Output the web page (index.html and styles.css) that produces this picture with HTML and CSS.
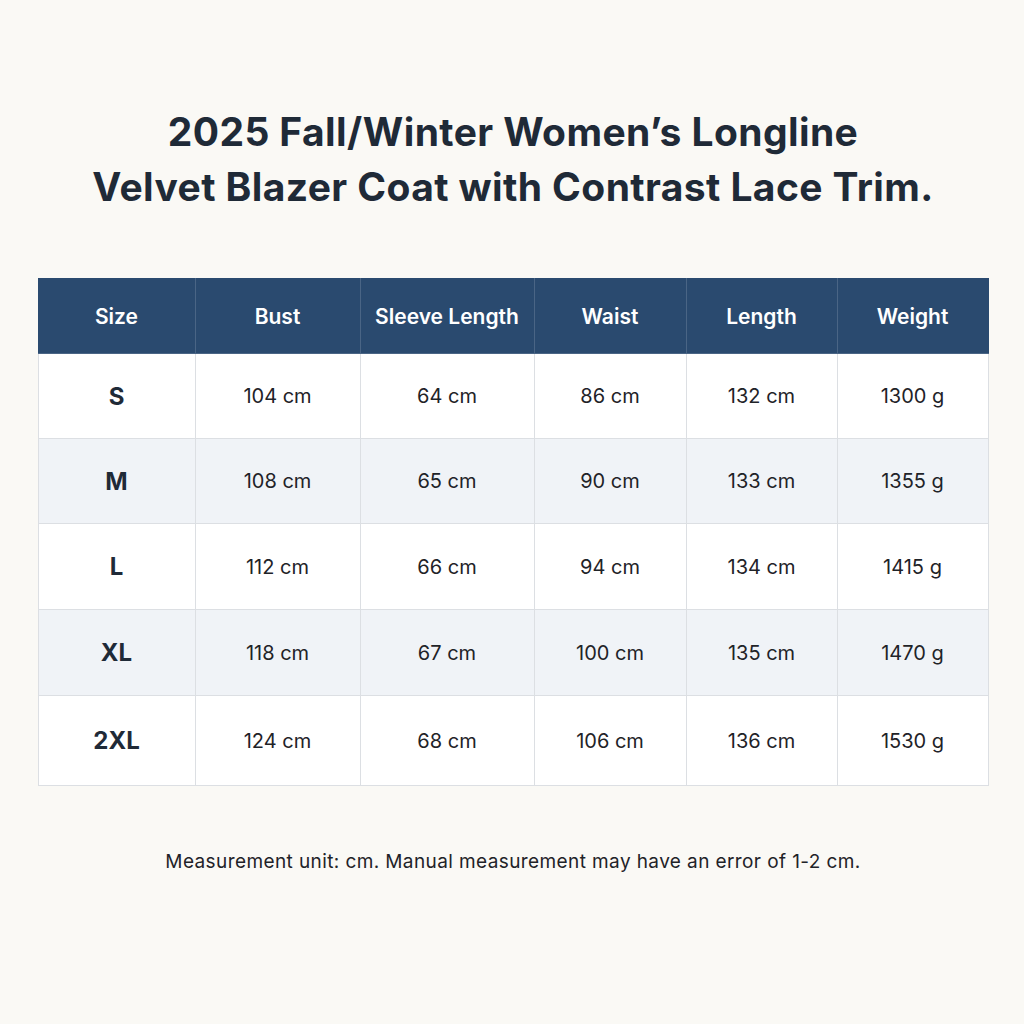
FILE: index.html
```html
<!DOCTYPE html>
<html lang="en">
<head>
<meta charset="utf-8">
<title>Size Chart</title>
<link rel="stylesheet" href="styles.css">
</head>
<body>
<main class="page">
  <h1 class="title">2025 Fall/Winter Women’s Longline<br>Velvet Blazer Coat with Contrast Lace Trim.</h1>
  <table class="chart">
    <colgroup>
      <col class="c1"><col class="c2"><col class="c3"><col class="c4"><col class="c5"><col class="c6">
    </colgroup>
    <thead>
      <tr><th>Size</th><th>Bust</th><th>Sleeve Length</th><th>Waist</th><th>Length</th><th>Weight</th></tr>
    </thead>
    <tbody>
      <tr><td class="size">S</td><td>104 cm</td><td>64 cm</td><td>86 cm</td><td>132 cm</td><td>1300 g</td></tr>
      <tr class="alt"><td class="size">M</td><td>108 cm</td><td>65 cm</td><td>90 cm</td><td>133 cm</td><td>1355 g</td></tr>
      <tr class="tall"><td class="size">L</td><td>112 cm</td><td>66 cm</td><td>94 cm</td><td>134 cm</td><td>1415 g</td></tr>
      <tr class="alt tall"><td class="size">XL</td><td>118 cm</td><td>67 cm</td><td>100 cm</td><td>135 cm</td><td>1470 g</td></tr>
      <tr class="last"><td class="size">2XL</td><td>124 cm</td><td>68 cm</td><td>106 cm</td><td>136 cm</td><td>1530 g</td></tr>
    </tbody>
  </table>
  <p class="note">Measurement unit: cm. Manual measurement may have an error of 1-2 cm.</p>
</main>
</body>
</html>
```

FILE: styles.css
```css
html, body {
  margin: 0;
  padding: 0;
  background: #faf9f5;
}
body {
  font-family: "Inter", "Lato", "Liberation Sans", sans-serif;
  color: #1f2a37;
}
.page {
  width: 1024px;
  height: 1024px;
  box-sizing: border-box;
  padding: 104px 36px 0 38px;
  display: flex;
  flex-direction: column;
  align-items: center;
}
.title {
  margin: 0;
  font-size: 39px;
  line-height: 55px;
  font-weight: 700;
  text-align: center;
  letter-spacing: 0.4px;
  color: #1f2a37;
}
.chart {
  margin-top: 64px;
  width: 950px;
  border-collapse: collapse;
  table-layout: fixed;
  background: #ffffff;
}
.c1 { width: 157px; }
.c2 { width: 165px; }
.c3 { width: 174px; }
.c4 { width: 152px; }
.c5 { width: 151px; }
.c6 { width: 151px; }
.chart th {
  background: #2a4a6f;
  color: #ffffff;
  font-size: 21px;
  font-weight: 600;
  height: 74px;
  padding: 0;
  border: 1px solid #4a6585;
  border-top-color: #2a4a6f;
}
.chart th:first-child { border-left-color: #2a4a6f; }
.chart th:last-child { border-right-color: #2a4a6f; }
.chart td {
  height: 84px;
  padding: 0;
  text-align: center;
  font-size: 20px;
  font-weight: 400;
  color: #1f2328;
  border: 1px solid #dcdfe3;
}
.chart tr.tall td { height: 85px; }
.chart tr.alt td { background: #f0f3f7; }
.chart tr.last td { height: 89px; }
.chart td.size {
  font-size: 24px;
  font-weight: 700;
  color: #1f2a37;
}
.note {
  margin: 64px 0 0;
  font-size: 19px;
  letter-spacing: 0.4px;
  color: #1f2328;
  text-align: center;
}
```
